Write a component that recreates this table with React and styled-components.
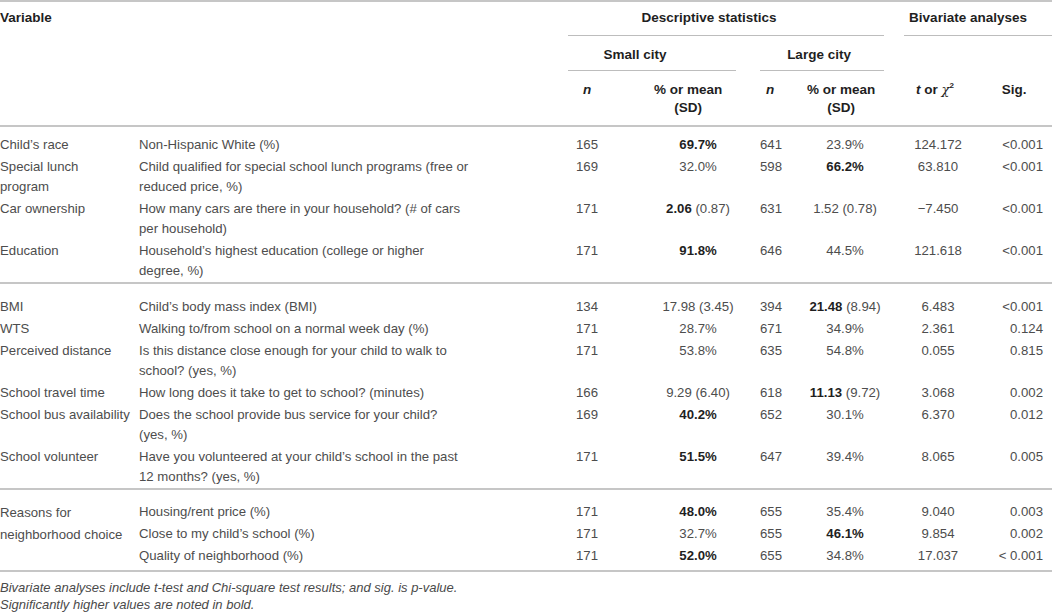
import React from 'react';
import styled, { createGlobalStyle } from 'styled-components';

const GlobalStyle = createGlobalStyle`
  body {
    margin: 0;
    background: #fff;
    font-family: "Liberation Sans", Arial, sans-serif;
  }
`;

const RULE = '#c6c6c6';
const SUBRULE = '#bdbdbd';
const INK = '#4d4d4d';
const BOLD_INK = '#1f1f1f';

const COLS = [139, 429, 80, 100, 52, 90, 96, 66];

const Page = styled.div`
  width: 1052px;
`;

const Table = styled.table`
  width: 1052px;
  table-layout: fixed;
  border-collapse: collapse;
  border-spacing: 0;
  border-top: 2px solid ${RULE};
  border-bottom: 2px solid ${RULE};
  font-size: 13.2px;
  color: ${INK};
`;

const Head = styled.thead`
  border-bottom: 2px solid ${RULE};
`;

const HeadCell = styled.th`
  padding: ${(p) => p.$pad || '0'};
  text-align: ${(p) => p.$align || 'center'};
  vertical-align: top;
  font-size: 13.5px;
  font-weight: bold;
  line-height: 18px;
  color: ${BOLD_INK};
  font-style: ${(p) => (p.$italic ? 'italic' : 'normal')};
`;

const GroupLabel = styled.div`
  margin: 0 ${(p) => p.$mr || 0}px 0 ${(p) => p.$ml || 0}px;
  padding: 0 ${(p) => (p.$shift || 0) * 2}px ${(p) => p.$pb}px 0;
  border-bottom: 1px solid ${SUBRULE};
  text-align: center;
`;

const Group = styled.tbody`
  border-bottom: ${(p) => (p.$last ? 'none' : `2px solid ${RULE}`)};
`;

const Row = styled.tr`
  & > td {
    padding-top: ${(p) => 1 + (p.$top || 0)}px;
    padding-bottom: ${(p) => 1 + (p.$bottom || 0)}px;
  }
`;

const Cell = styled.td`
  vertical-align: top;
  line-height: ${(p) => p.$lh || 20}px;
  white-space: nowrap;
  text-align: ${(p) => p.$align || 'left'};
  padding-left: ${(p) => p.$pl || 0}px;
  padding-right: ${(p) => p.$pr || 0}px;
`;

const Strong = styled.b`
  font-weight: bold;
  color: ${BOLD_INK};
`;

const Chi = styled.span`
  font-family: "DejaVu Serif", serif;
  font-style: italic;
  font-weight: normal;
  font-size: 13px;
`;

const Sup = styled.sup`
  font-size: 8px;
  vertical-align: 6px;
  line-height: 0;
`;

const Note = styled.div`
  padding-top: 7px;
  font-size: 13px;
  line-height: 17px;
  font-style: italic;
  color: #4a4a4a;
`;

const groups = [
  {
    top: 7,
    rows: [
      { v: ['Child\u2019s race'], d: ['Non-Hispanic White (%)'], n1: '165', p1: <Strong>69.7%</Strong>, n2: '641', p2: '23.9%', t: '124.172', s: '<0.001' },
      { v: ['Special lunch', 'program'], d: ['Child qualified for special school lunch programs (free or', 'reduced price, %)'], n1: '169', p1: '32.0%', n2: '598', p2: <Strong>66.2%</Strong>, t: '63.810', s: '<0.001' },
      { v: ['Car ownership'], d: ['How many cars are there in your household? (# of cars', 'per household)'], n1: '171', p1: <><Strong>2.06</Strong> (0.87)</>, n2: '631', p2: '1.52 (0.78)', t: '\u22127.450', s: '<0.001' },
      { v: ['Education'], d: ['Household\u2019s highest education (college or higher', 'degree, %)'], n1: '171', p1: <Strong>91.8%</Strong>, n2: '646', p2: '44.5%', t: '121.618', s: '<0.001' },
    ],
  },
  {
    top: 12,
    rows: [
      { v: ['BMI'], d: ['Child\u2019s body mass index (BMI)'], n1: '134', p1: '17.98 (3.45)', n2: '394', p2: <><Strong>21.48</Strong> (8.94)</>, t: '6.483', s: '<0.001' },
      { v: ['WTS'], d: ['Walking to/from school on a normal week day (%)'], n1: '171', p1: '28.7%', n2: '671', p2: '34.9%', t: '2.361', s: '0.124' },
      { v: ['Perceived distance'], d: ['Is this distance close enough for your child to walk to', 'school? (yes, %)'], n1: '171', p1: '53.8%', n2: '635', p2: '54.8%', t: '0.055', s: '0.815' },
      { v: ['School travel time'], d: ['How long does it take to get to school? (minutes)'], n1: '166', p1: '9.29 (6.40)', n2: '618', p2: <><Strong>11.13</Strong> (9.72)</>, t: '3.068', s: '0.002' },
      { v: ['School bus availability'], d: ['Does the school provide bus service for your child?', '(yes, %)'], n1: '169', p1: <Strong>40.2%</Strong>, n2: '652', p2: '30.1%', t: '6.370', s: '0.012' },
      { v: ['School volunteer'], d: ['Have you volunteered at your child\u2019s school in the past', '12 months? (yes, %)'], n1: '171', p1: <Strong>51.5%</Strong>, n2: '647', p2: '39.4%', t: '8.065', s: '0.005' },
    ],
  },
  {
    top: 11,
    bottom: 3,
    rows: [
      { v: ['Reasons for', 'neighborhood choice'], span: 3, d: ['Housing/rent price (%)'], n1: '171', p1: <Strong>48.0%</Strong>, n2: '655', p2: '35.4%', t: '9.040', s: '0.003' },
      { v: null, d: ['Close to my child\u2019s school (%)'], n1: '171', p1: '32.7%', n2: '655', p2: <Strong>46.1%</Strong>, t: '9.854', s: '0.002' },
      { v: null, d: ['Quality of neighborhood (%)'], n1: '171', p1: <Strong>52.0%</Strong>, n2: '655', p2: '34.8%', t: '17.037', s: '< 0.001' },
    ],
  },
];

const Lines = ({ items }) =>
  items.map((line, i) => (
    <React.Fragment key={i}>
      {i > 0 && <br />}
      {line}
    </React.Fragment>
  ));

const DataRow = ({ row, top, bottom }) => (
  <Row $top={top} $bottom={bottom}>
    {row.v && (
      <Cell rowSpan={row.span || 1} $lh={row.span ? 22 : 20}>
        <Lines items={row.v} />
      </Cell>
    )}
    <Cell>
      <Lines items={row.d} />
    </Cell>
    <Cell $pl={8}>{row.n1}</Cell>
    <Cell $align="center">{row.p1}</Cell>
    <Cell $pl={12}>{row.n2}</Cell>
    <Cell $align="center">{row.p2}</Cell>
    <Cell $align="center">{row.t}</Cell>
    <Cell $align="right" $pr={9}>{row.s}</Cell>
  </Row>
);

const App = () => (
  <Page>
    <GlobalStyle />
    <Table>
      <colgroup>
        {COLS.map((w, i) => (
          <col key={i} style={{ width: w }} />
        ))}
      </colgroup>
      <Head>
        <tr>
          <HeadCell colSpan={2} rowSpan={3} $align="left" $pad="7px 0 0">
            Variable
          </HeadCell>
          <HeadCell colSpan={4} $pad="7px 0 0">
            <GroupLabel $mr={6} $shift={17} $pb={8}>Descriptive statistics</GroupLabel>
          </HeadCell>
          <HeadCell colSpan={2} $pad="7px 0 0">
            <GroupLabel $ml={14} $shift={10} $pb={8}>Bivariate analyses</GroupLabel>
          </HeadCell>
        </tr>
        <tr>
          <HeadCell colSpan={2} $pad="10px 0 0">
            <GroupLabel $mr={12} $shift={17} $pb={6}>Small city</GroupLabel>
          </HeadCell>
          <HeadCell colSpan={2} $pad="10px 0 0">
            <GroupLabel $ml={12} $mr={6} $shift={3} $pb={6}>Large city</GroupLabel>
          </HeadCell>
          <HeadCell colSpan={2} />
        </tr>
        <tr>
          <HeadCell $align="left" $italic $pad="10px 0 8px 15px">n</HeadCell>
          <HeadCell $pad="10px 20px 8px 0">% or mean<br />(SD)</HeadCell>
          <HeadCell $align="left" $italic $pad="10px 0 8px 18px">n</HeadCell>
          <HeadCell $pad="10px 8px 8px 0">% or mean<br />(SD)</HeadCell>
          <HeadCell $pad="10px 6px 8px 0">
            <i>t</i> or <Chi>χ</Chi><Sup>2</Sup>
          </HeadCell>
          <HeadCell $pad="10px 10px 8px 0">Sig.</HeadCell>
        </tr>
      </Head>
      {groups.map((g, gi) => (
        <Group key={gi} $last={gi === groups.length - 1}>
          {g.rows.map((row, ri) => (
            <DataRow
              key={ri}
              row={row}
              top={ri === 0 ? g.top : 0}
              bottom={ri === g.rows.length - 1 ? g.bottom || 0 : 0}
            />
          ))}
        </Group>
      ))}
    </Table>
    <Note>
      Bivariate analyses include t-test and Chi-square test results; and sig. is p-value.
      <br />
      Significantly higher values are noted in bold.
    </Note>
  </Page>
);

export default App;
